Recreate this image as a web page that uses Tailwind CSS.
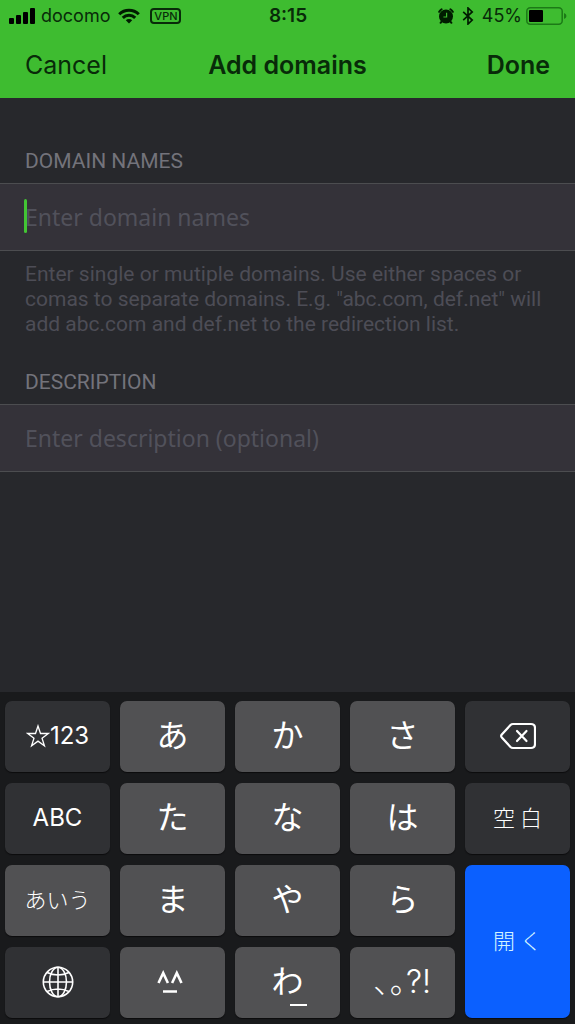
<!DOCTYPE html>
<html lang="en">
<head>
<meta charset="utf-8">
<meta name="viewport" content="width=device-width, initial-scale=1">
<title>Add domains</title>
<script src="https://cdn.jsdelivr.net/npm/@tailwindcss/browser@4"></script>
</head>
<body class="flex min-h-screen flex-col bg-[#27282c] font-['Inter','Noto_Sans_CJK_JP',sans-serif]">
<header class="bg-[#3ebc30] text-[#082b09]">
  <div class="grid h-8 grid-cols-[1fr_auto_1fr] items-center pr-2 pl-[9px] text-[18px] leading-6">
    <div class="flex items-center">
      <svg class="mr-[6px] h-4 w-[26px]" viewBox="0 0 26 16" fill="#000" aria-hidden="true"><rect x="0" y="10" width="5" height="6" rx="1"/><rect x="7" y="7" width="5" height="9" rx="1"/><rect x="14" y="4" width="5" height="12" rx="1"/><rect x="21" y="0" width="5" height="16" rx="1"/></svg>
      <span>docomo</span>
      <svg class="ml-2 h-4 w-[22px]" viewBox="0 0 22 16" fill="none" stroke="#001c00" stroke-width="3" aria-hidden="true"><path d="M1.2 6.2a14 14 0 0 1 19.6 0M4.8 9.900a8.800 8.800 0 0 1 12.400 0"/><path d="M11 15.500l-3.200-3.200a4.600 4.600 0 0 1 6.400 0z" fill="#001c00" stroke="none"/></svg>
      <span class="ml-[10px] flex h-4 w-[31px] items-center justify-center rounded-[4px] border-2 border-current text-[11px] font-medium leading-3">VPN</span>
    </div>
    <span class="text-[19px] font-semibold">8:15</span>
    <div class="flex items-center justify-end">
      <svg class="mr-2 h-4 w-4" viewBox="0 0 16 16" aria-hidden="true"><circle cx="8" cy="8.500" r="7" fill="#001c00"/><path d="M1.200 3.800A8 8 0 0 1 3.600 1.200M12.400 1.200a8 8 0 0 1 2.400 2.600M3.600 13.600l-1 1.200M12.400 13.600l1 1.200" stroke="#001c00" stroke-width="2" fill="none" stroke-linecap="round"/><path d="M8.600 4.800v4.200H5.400" stroke="#3ebc30" stroke-width="1.200" fill="none"/></svg>
      <svg class="mr-2 h-[18px] w-3" viewBox="0 0 12 18" fill="none" stroke="#001c00" stroke-width="1.700" aria-hidden="true"><path d="M1.200 4.800l9 8.200L6 17V1l4.200 4-9 8.200"/></svg>
      <span>45%</span>
      <svg class="ml-1 h-[18px] w-[41px]" viewBox="0 0 41 18" aria-hidden="true"><rect x=".8" y=".8" width="35.400" height="16.400" rx="3.500" fill="none" stroke="#1c7a17" stroke-width="1.500"/><rect x="3" y="3" width="14" height="12" rx="1" fill="#000"/><path d="M38 6v6q2.500-1 2.500-3T38 6" fill="#1c7a17"/></svg>
    </div>
  </div>
  <div class="grid h-[66px] grid-cols-[1fr_auto_1fr] items-center px-[25px] text-[25px] leading-8">
    <button type="button" class="justify-self-start">Cancel</button>
    <h1 class="font-semibold">Add domains</h1>
    <button type="button" class="justify-self-end font-semibold">Done</button>
  </div>
</header>

<main class="pt-[49px] pb-8 text-[20px] leading-7">
  <label for="domains" class="block px-[25px] font-['Roboto',sans-serif] text-[21px] text-[#73737b]">DOMAIN NAMES</label>
  <div class="relative mt-2 h-[68px] border-y border-[#4c4d50] bg-[#343239]">
    <input id="domains" type="text" placeholder="Enter domain names" aria-describedby="hint" class="h-full w-full px-[25px] font-['Noto_Sans',sans-serif] text-[23px] text-white caret-[#43c534] outline-none placeholder:text-[#51515b]">
    <span class="absolute top-[15px] left-6 h-[34px] w-[3px] rounded-full bg-[#43c534]"></span>
  </div>
  <p id="hint" class="mt-[11px] px-[25px] font-['Roboto',sans-serif] text-[21px] leading-[25px] text-[#4d4d56]">Enter single or mutiple domains. Use either spaces or comas to separate domains. E.g. "abc.com, def.net" will add abc.com and def.net to the redirection list.</p>
  <label for="description" class="mt-[31px] block px-[25px] font-['Roboto',sans-serif] text-[21px] text-[#73737b]">DESCRIPTION</label>
  <div class="mt-2 h-[68px] border-y border-[#4c4d50] bg-[#343239]">
    <input id="description" type="text" placeholder="Enter description (optional)" class="h-full w-full px-[25px] font-['Noto_Sans',sans-serif] text-[23px] text-white outline-none placeholder:text-[#51515b]">
  </div>
</main>

<section aria-label="Keyboard" lang="ja" class="mt-auto grid auto-rows-[71px] grid-cols-5 gap-x-[10px] gap-y-[11px] bg-[#191a1c] px-[5px] pt-[9px] pb-[6px] text-[32px] leading-10 text-white [&>button]:flex [&>button]:items-center [&>button]:justify-center [&>button]:rounded-[7px] [&>button]:pb-[2px] [&>button]:shadow-[0_1px_1px_#0c0c0d]">
  <button type="button" class="bg-[#303134] text-[24px]"><svg class="h-6 w-6" viewBox="0 0 22 22" fill="none" stroke="currentColor" stroke-width="1.200" aria-hidden="true"><path d="M11 1.800l2.300 6.900h7.200l-5.800 4.300 2.200 7-5.900-4.300L5.100 20l2.200-7-5.800-4.300h7.200z"/></svg>123</button>
  <button type="button" class="bg-[#515153]">あ</button>
  <button type="button" class="bg-[#515153]">か</button>
  <button type="button" class="bg-[#515153]">さ</button>
  <button type="button" class="bg-[#303134]" aria-label="Delete"><svg class="h-7 w-9" viewBox="0 0 36 28" fill="none" stroke="currentColor" stroke-width="2.200" stroke-linecap="round" stroke-linejoin="round" aria-hidden="true"><path d="M13 2h18q4 0 4 4v16q0 4-4 4H13q-1.500 0-2.500-1L1.800 15.500q-1.300-1.500 0-3L10.500 3q1-1 2.500-1z"/><path d="M17 9l9.500 10M26.500 9L17 19"/></svg></button>

  <button type="button" class="bg-[#303134] text-[24px]">ABC</button>
  <button type="button" class="bg-[#515153]">た</button>
  <button type="button" class="bg-[#515153]">な</button>
  <button type="button" class="bg-[#515153]">は</button>
  <button type="button" class="gap-[5px] bg-[#303134] text-[22px] font-light"><span>空</span><span>白</span></button>

  <button type="button" class="bg-[#515153] text-[22px] font-light">あいう</button>
  <button type="button" class="bg-[#515153]">ま</button>
  <button type="button" class="bg-[#515153]">や</button>
  <button type="button" class="bg-[#515153]">ら</button>
  <button type="button" class="row-span-2 gap-[5px] bg-[#0b60ff] text-[22px] font-light text-[#d3f4ff]"><span>開</span><span>く</span></button>

  <button type="button" class="bg-[#303134]" aria-label="Next keyboard"><svg class="h-8 w-8" viewBox="0 0 32 32" fill="none" stroke="currentColor" stroke-width="1.600" aria-hidden="true"><circle cx="16" cy="16" r="14.700"/><ellipse cx="16" cy="16" rx="8.500" ry="14.700"/><path d="M16 1.300v29.400M1.300 16h29.400M5 6.500q11 5 22 0M5 25.500q11-5 22 0"/></svg></button>
  <button type="button" class="bg-[#515153]" aria-label="^_^"><svg class="h-6 w-8" viewBox="0 0 32 24" fill="none" stroke="currentColor" stroke-width="2.600" aria-hidden="true"><path d="M1.500 13L6.200 3l4.700 10M15.100 13L19.800 3l4.700 10M6 21.500h14"/></svg></button>
  <button type="button" class="relative bg-[#515153]">わ<span class="absolute bottom-3 left-[55px] h-[2px] w-[17px] bg-white"></span></button>
  <button type="button" class="bg-[#515153] font-light">､｡?!</button>
</section>
</body>
</html>
